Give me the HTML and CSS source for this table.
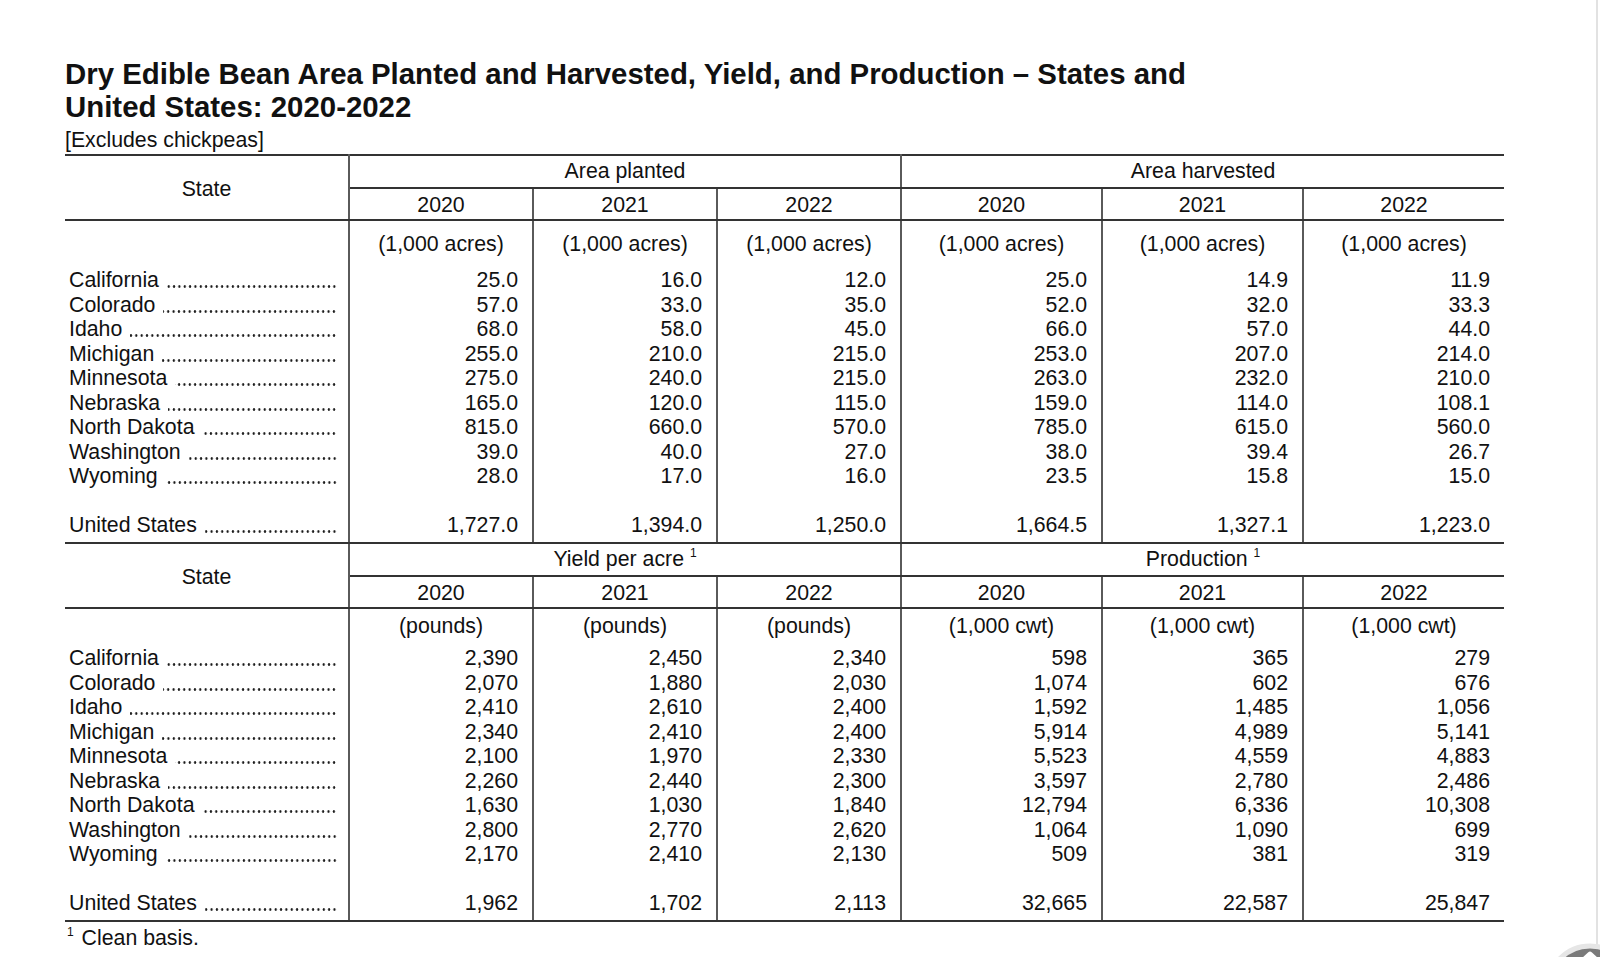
FILE: index.html
```html
<!DOCTYPE html>
<html lang="en">
<head>
<meta charset="utf-8">
<title>Dry Edible Bean Area Planted and Harvested</title>
<link rel="stylesheet" href="styles.css">
</head>
<body>
<div class="page">
  <h1 class="title">Dry Edible Bean Area Planted and Harvested, Yield, and Production – States and<br>United States: 2020-2022</h1>
  <p class="sub">[Excludes chickpeas]</p>
  <table class="data">
    <colgroup>
      <col class="c-state"><col class="c-a"><col class="c-a"><col class="c-a"><col class="c-b"><col class="c-b"><col class="c-b">
    </colgroup>
    <tbody>
      <tr class="grp first">
        <td class="state-h vr" rowspan="2">State</td>
        <td class="ctr vr" colspan="3">Area planted</td>
        <td class="ctr" colspan="3">Area harvested</td>
      </tr>
      <tr class="yrs">
        <td class="ctr vr">2020</td><td class="ctr vr">2021</td><td class="ctr vr">2022</td>
        <td class="ctr vr">2020</td><td class="ctr vr">2021</td><td class="ctr">2022</td>
      </tr>
      <tr class="units u1">
        <td class="vr"></td>
        <td class="ctr vr">(1,000 acres)</td><td class="ctr vr">(1,000 acres)</td><td class="ctr vr">(1,000 acres)</td>
        <td class="ctr vr">(1,000 acres)</td><td class="ctr vr">(1,000 acres)</td><td class="ctr">(1,000 acres)</td>
      </tr>
      <tr class="row"><td class="vr"><div class="lead"><span class="nm">California</span><span class="dots"></span></div></td><td class="num vr">25.0</td><td class="num vr">16.0</td><td class="num vr">12.0</td><td class="num vr">25.0</td><td class="num vr">14.9</td><td class="num">11.9</td></tr>
      <tr class="row"><td class="vr"><div class="lead"><span class="nm">Colorado</span><span class="dots"></span></div></td><td class="num vr">57.0</td><td class="num vr">33.0</td><td class="num vr">35.0</td><td class="num vr">52.0</td><td class="num vr">32.0</td><td class="num">33.3</td></tr>
      <tr class="row"><td class="vr"><div class="lead"><span class="nm">Idaho</span><span class="dots"></span></div></td><td class="num vr">68.0</td><td class="num vr">58.0</td><td class="num vr">45.0</td><td class="num vr">66.0</td><td class="num vr">57.0</td><td class="num">44.0</td></tr>
      <tr class="row"><td class="vr"><div class="lead"><span class="nm">Michigan</span><span class="dots"></span></div></td><td class="num vr">255.0</td><td class="num vr">210.0</td><td class="num vr">215.0</td><td class="num vr">253.0</td><td class="num vr">207.0</td><td class="num">214.0</td></tr>
      <tr class="row"><td class="vr"><div class="lead"><span class="nm">Minnesota</span><span class="dots"></span></div></td><td class="num vr">275.0</td><td class="num vr">240.0</td><td class="num vr">215.0</td><td class="num vr">263.0</td><td class="num vr">232.0</td><td class="num">210.0</td></tr>
      <tr class="row"><td class="vr"><div class="lead"><span class="nm">Nebraska</span><span class="dots"></span></div></td><td class="num vr">165.0</td><td class="num vr">120.0</td><td class="num vr">115.0</td><td class="num vr">159.0</td><td class="num vr">114.0</td><td class="num">108.1</td></tr>
      <tr class="row"><td class="vr"><div class="lead"><span class="nm">North Dakota</span><span class="dots"></span></div></td><td class="num vr">815.0</td><td class="num vr">660.0</td><td class="num vr">570.0</td><td class="num vr">785.0</td><td class="num vr">615.0</td><td class="num">560.0</td></tr>
      <tr class="row"><td class="vr"><div class="lead"><span class="nm">Washington</span><span class="dots"></span></div></td><td class="num vr">39.0</td><td class="num vr">40.0</td><td class="num vr">27.0</td><td class="num vr">38.0</td><td class="num vr">39.4</td><td class="num">26.7</td></tr>
      <tr class="row"><td class="vr"><div class="lead"><span class="nm">Wyoming</span><span class="dots"></span></div></td><td class="num vr">28.0</td><td class="num vr">17.0</td><td class="num vr">16.0</td><td class="num vr">23.5</td><td class="num vr">15.8</td><td class="num">15.0</td></tr>
      <tr class="spacer"><td class="vr"></td><td class="vr"></td><td class="vr"></td><td class="vr"></td><td class="vr"></td><td class="vr"></td><td></td></tr>
      <tr class="row total"><td class="vr"><div class="lead"><span class="nm">United States</span><span class="dots"></span></div></td><td class="num vr">1,727.0</td><td class="num vr">1,394.0</td><td class="num vr">1,250.0</td><td class="num vr">1,664.5</td><td class="num vr">1,327.1</td><td class="num">1,223.0</td></tr>

      <tr class="grp">
        <td class="state-h vr" rowspan="2">State</td>
        <td class="ctr vr" colspan="3">Yield per acre <sup>1</sup></td>
        <td class="ctr" colspan="3">Production <sup>1</sup></td>
      </tr>
      <tr class="yrs">
        <td class="ctr vr">2020</td><td class="ctr vr">2021</td><td class="ctr vr">2022</td>
        <td class="ctr vr">2020</td><td class="ctr vr">2021</td><td class="ctr">2022</td>
      </tr>
      <tr class="units u2">
        <td class="vr"></td>
        <td class="ctr vr">(pounds)</td><td class="ctr vr">(pounds)</td><td class="ctr vr">(pounds)</td>
        <td class="ctr vr">(1,000 cwt)</td><td class="ctr vr">(1,000 cwt)</td><td class="ctr">(1,000 cwt)</td>
      </tr>
      <tr class="row"><td class="vr"><div class="lead"><span class="nm">California</span><span class="dots"></span></div></td><td class="num vr">2,390</td><td class="num vr">2,450</td><td class="num vr">2,340</td><td class="num vr">598</td><td class="num vr">365</td><td class="num">279</td></tr>
      <tr class="row"><td class="vr"><div class="lead"><span class="nm">Colorado</span><span class="dots"></span></div></td><td class="num vr">2,070</td><td class="num vr">1,880</td><td class="num vr">2,030</td><td class="num vr">1,074</td><td class="num vr">602</td><td class="num">676</td></tr>
      <tr class="row"><td class="vr"><div class="lead"><span class="nm">Idaho</span><span class="dots"></span></div></td><td class="num vr">2,410</td><td class="num vr">2,610</td><td class="num vr">2,400</td><td class="num vr">1,592</td><td class="num vr">1,485</td><td class="num">1,056</td></tr>
      <tr class="row"><td class="vr"><div class="lead"><span class="nm">Michigan</span><span class="dots"></span></div></td><td class="num vr">2,340</td><td class="num vr">2,410</td><td class="num vr">2,400</td><td class="num vr">5,914</td><td class="num vr">4,989</td><td class="num">5,141</td></tr>
      <tr class="row"><td class="vr"><div class="lead"><span class="nm">Minnesota</span><span class="dots"></span></div></td><td class="num vr">2,100</td><td class="num vr">1,970</td><td class="num vr">2,330</td><td class="num vr">5,523</td><td class="num vr">4,559</td><td class="num">4,883</td></tr>
      <tr class="row"><td class="vr"><div class="lead"><span class="nm">Nebraska</span><span class="dots"></span></div></td><td class="num vr">2,260</td><td class="num vr">2,440</td><td class="num vr">2,300</td><td class="num vr">3,597</td><td class="num vr">2,780</td><td class="num">2,486</td></tr>
      <tr class="row"><td class="vr"><div class="lead"><span class="nm">North Dakota</span><span class="dots"></span></div></td><td class="num vr">1,630</td><td class="num vr">1,030</td><td class="num vr">1,840</td><td class="num vr">12,794</td><td class="num vr">6,336</td><td class="num">10,308</td></tr>
      <tr class="row"><td class="vr"><div class="lead"><span class="nm">Washington</span><span class="dots"></span></div></td><td class="num vr">2,800</td><td class="num vr">2,770</td><td class="num vr">2,620</td><td class="num vr">1,064</td><td class="num vr">1,090</td><td class="num">699</td></tr>
      <tr class="row"><td class="vr"><div class="lead"><span class="nm">Wyoming</span><span class="dots"></span></div></td><td class="num vr">2,170</td><td class="num vr">2,410</td><td class="num vr">2,130</td><td class="num vr">509</td><td class="num vr">381</td><td class="num">319</td></tr>
      <tr class="spacer"><td class="vr"></td><td class="vr"></td><td class="vr"></td><td class="vr"></td><td class="vr"></td><td class="vr"></td><td></td></tr>
      <tr class="row total"><td class="vr"><div class="lead"><span class="nm">United States</span><span class="dots"></span></div></td><td class="num vr">1,962</td><td class="num vr">1,702</td><td class="num vr">2,113</td><td class="num vr">32,665</td><td class="num vr">22,587</td><td class="num">25,847</td></tr>
    </tbody>
  </table>
  <p class="foot"><sup>1</sup> Clean basis.</p>
</div>
<div class="edge"></div>
<div class="totop">
  <svg width="90" height="90" viewBox="0 0 90 90" aria-hidden="true">
    <circle cx="45" cy="45" r="42" fill="#7a7a7a" stroke="#e6e6e6" stroke-width="5"/>
    <path d="M33 22 L45 11 L57 22" fill="none" stroke="#fff" stroke-width="5" stroke-linecap="round" stroke-linejoin="round"/>
  </svg>
</div>
</body>
</html>
```

FILE: styles.css
```css
html, body {
  margin: 0;
  padding: 0;
  background: #fff;
}

body {
  font-family: "Liberation Sans", Arial, Helvetica, sans-serif;
  color: #111;
  overflow: hidden;
}

.page {
  padding: 57px 0 0 65px;
  width: 1438px;
}

.title {
  margin: 0;
  font-size: 29.4px;
  line-height: 33px;
  font-weight: bold;
  white-space: nowrap;
}

.sub {
  margin: 5px 0 0;
  font-size: 21.3px;
  line-height: 24.5px;
}

.data {
  border-collapse: collapse;
  table-layout: fixed;
  width: 1438px;
  margin-top: 1px;
  font-size: 21.3px;
  line-height: 24.5px;
}

.c-state { width: 284px; }
.c-a { width: 184px; }
.c-b { width: 201px; }

.data td {
  padding: 0;
  vertical-align: middle;
}

.data td.vr {
  border-right: 2px solid #5a5a5a;
}

.ctr { text-align: center; }

.num {
  text-align: right;
  padding-right: 14px !important;
}

.grp td {
  height: 30px;
  padding-top: 1px;
  border-top: 2px solid #333;
  border-bottom: 2px solid #333;
}

.grp td.state-h {
  text-align: center;
  padding-top: 4px;
  border-bottom: 2px solid #333;
}

.yrs td {
  height: 27px;
  padding-top: 3px;
  border-bottom: 2px solid #333;
}

.units.u1 td {
  padding: 11px 0 12px;
}

.units.u2 td {
  padding: 5px 0 8px;
}

.row td {
  height: 24.5px;
}

.spacer td {
  height: 24.5px;
}

.total td {
  padding-bottom: 4px;
  border-bottom: 2px solid #333;
}

.lead {
  display: flex;
  align-items: stretch;
  padding: 0 11px 0 4px;
  white-space: nowrap;
}

.nm {
  flex: none;
  padding-right: 8px;
}

.dots {
  flex: 1 1 auto;
  min-width: 0;
  background-image: radial-gradient(circle at center, #1a1a1a 0, #1a1a1a 1px, rgba(0,0,0,0) 1.45px);
  background-size: 5.35px 3px;
  background-repeat: repeat-x;
  background-position: right 0 bottom 4.5px;
}

sup {
  font-size: 12px;
  line-height: 0;
  vertical-align: 9px;
}

.foot {
  margin: 4px 0 0;
  padding-left: 2px;
  font-size: 21.3px;
  line-height: 24.5px;
}

.foot sup {
  margin-right: 2px;
}

.edge {
  position: fixed;
  top: 0;
  right: 2px;
  width: 2px;
  height: 100%;
  background: #e2e2e2;
}

.totop {
  position: fixed;
  left: 1545px;
  top: 943px;
  width: 90px;
  height: 90px;
}
```
